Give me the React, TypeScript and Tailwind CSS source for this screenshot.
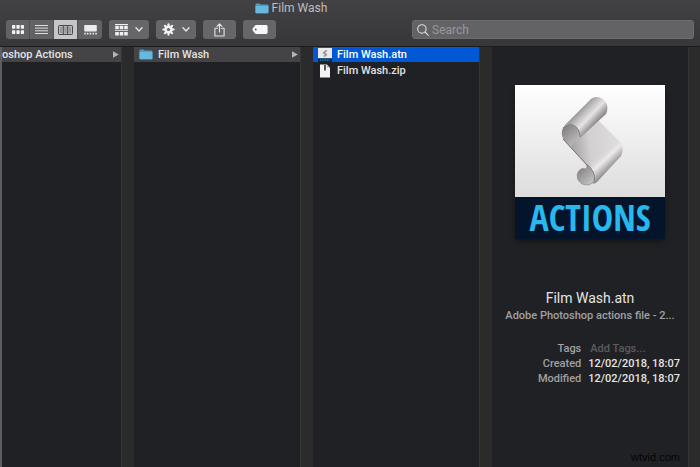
import { useState } from 'react';
import type { ReactNode } from 'react';
import clsx from 'clsx';

type Entry = { name: string; icon: 'folder' | 'atn' | 'zip' | null };

const files: Entry[] = [
  { name: 'Film Wash.atn', icon: 'atn' },
  { name: 'Film Wash.zip', icon: 'zip' },
];

const dates = [
  { label: 'Created', value: '12/02/2018, 18:07' },
  { label: 'Modified', value: '12/02/2018, 18:07' },
];

function FolderIcon() {
  return (
    <svg className="w-[14px] h-[11px] shrink-0" viewBox="0 0 14 11">
      <path d="M0.5 1.4Q0.5 0.6 1.3 0.6H4.6L5.8 1.6H12.6Q13.4 1.6 13.4 2.4V9.4Q13.4 10.2 12.6 10.2H1.3Q0.5 10.2 0.5 9.4Z" fill="#4a9ec4" />
      <path d="M0.5 2.9H13.4V9.4Q13.4 10.2 12.6 10.2H1.3Q0.5 10.2 0.5 9.4Z" fill="#67b8dc" />
    </svg>
  );
}

function AtnIcon() {
  return (
    <svg className="w-[14px] h-[14px] shrink-0" viewBox="0 0 14 14">
      <rect width="14" height="10.4" fill="#e9e9e9" />
      <rect y="10.4" width="14" height="3.6" fill="#0a2a4a" />
      <path d="M2 12.2H12" stroke="#2388a8" strokeWidth="1.2" strokeDasharray="1.2 0.5" />
      <path d="M8.2 2.8L5.6 4.8L8.4 6.6L6.4 8" fill="none" stroke="#929292" strokeWidth="1.7" strokeLinecap="round" strokeLinejoin="round" />
    </svg>
  );
}

function ZipIcon() {
  return (
    <svg className="w-[14px] h-[14px] shrink-0" viewBox="0 0 14 14">
      <path d="M2 0.5H8.8L12 3.8V13.5H2Z" fill="#f4f4f4" />
      <path d="M8.8 0.5V3.8H12Z" fill="#bdbdbd" />
      <path d="M7 1V6.6" stroke="#3c3c3c" strokeWidth="1.7" />
    </svg>
  );
}

function ChevronIcon() {
  return (
    <svg className="w-[8px] h-[5px]" viewBox="0 0 8 5" fill="none" stroke="#e6e6e7" strokeWidth="1.4" strokeLinecap="round" strokeLinejoin="round">
      <path d="M1 0.8L4 3.9L7 0.8" />
    </svg>
  );
}

function GridIcon() {
  return (
    <svg className="w-[12px] h-[9px]" viewBox="0 0 12 9" fill="#f2f2f2">
      {[0, 4.4, 8.8].map((x) => (
        <g key={x}>
          <rect x={x} y="0" width="3.3" height="3.7" rx="0.6" />
          <rect x={x} y="5.2" width="3.3" height="3.7" rx="0.6" />
        </g>
      ))}
    </svg>
  );
}

function ListIcon() {
  return (
    <svg className="w-[13px] h-[9px]" viewBox="0 0 13 9" stroke="#dededf" strokeWidth="1">
      <path d="M0 0.5H13M0 3.1H13M0 5.8H13M0 8.5H13" />
    </svg>
  );
}

function ColumnsIcon() {
  return (
    <svg className="w-[15px] h-[10px]" viewBox="0 0 15 10">
      <rect x="0.5" y="0.5" width="14" height="9" rx="0.8" fill="#b8b8bb" stroke="#48484b" strokeWidth="1" />
      <path d="M2 2H4.2V8H2ZM6.4 2H8.6V8H6.4ZM10.8 2H13V8H10.8Z" fill="#98989b" />
      <path d="M5.3 0.6V9.4M9.7 0.6V9.4" stroke="#48484b" strokeWidth="1" />
    </svg>
  );
}

function GalleryIcon() {
  return (
    <svg className="w-[13px] h-[10px]" viewBox="0 0 13 10" fill="#ececed">
      <rect x="0.2" y="0" width="12.6" height="6.6" rx="0.8" />
      <path d="M0.2 7.8H1.7V9.6H0.2ZM2.8 7.8H4.4V9.6H2.8ZM5.6 7.8H7.2V9.6H5.6ZM8.5 7.8H10.1V9.6H8.5ZM11.3 7.8H12.8V9.6H11.3Z" />
    </svg>
  );
}

function ArrangeIcon() {
  return (
    <svg className="w-[13px] h-[12px]" viewBox="0 0 13 12" fill="#f0f0f0">
      {[0.2, 4.7, 9.2].map((x) => (
        <g key={x}>
          <rect x={x} y="1.7" width="3.6" height="3.5" rx="0.5" />
          <rect x={x} y="8" width="3.6" height="3.5" rx="0.5" />
        </g>
      ))}
      <path d="M0 0H13V0.9H0ZM0 6.2H13V7.1H0Z" />
    </svg>
  );
}

function GearIcon() {
  return (
    <svg className="w-[13px] h-[13px]" viewBox="0 0 13 13">
      <g stroke="#f3f3f3" strokeWidth="2" strokeLinecap="round">
        {[0, 45, 90, 135].map((a) => (
          <path key={a} d="M6.5 1.3V11.7" transform={`rotate(${a} 6.5 6.5)`} />
        ))}
      </g>
      <circle cx="6.5" cy="6.5" r="4.2" fill="#f3f3f3" />
      <circle cx="6.5" cy="6.5" r="1.6" fill="#68686b" />
    </svg>
  );
}

function ShareIcon() {
  return (
    <svg className="w-[11px] h-[14px]" viewBox="0 0 11 14" fill="none" stroke="#e4e4e5" strokeWidth="1.1" strokeLinecap="round" strokeLinejoin="round">
      <path d="M3.6 5.2H0.9V13H10.1V5.2H7.4M5.5 9V1M3 3.4L5.5 0.9L8 3.4" />
    </svg>
  );
}

function TagIcon() {
  return (
    <svg className="w-[16px] h-[9px]" viewBox="0 0 16 9">
      <path d="M4.2 0.1H14.2Q15.6 0.1 15.6 1.5V7.5Q15.6 8.9 14.2 8.9H4.2Q3.4 8.9 2.8 8.2L0.6 5.3Q0.1 4.5 0.6 3.7L2.8 0.8Q3.4 0.1 4.2 0.1Z" fill="#f7f7f7" />
      <circle cx="3.7" cy="4.5" r="1" fill="#626265" />
    </svg>
  );
}

function ScrollArt() {
  return (
    <svg className="w-[64px] h-[90px]" viewBox="0 0 64 90">
      <defs>
        <linearGradient id="sheet" gradientUnits="userSpaceOnUse" x1="14" y1="56" x2="62" y2="50">
          <stop offset="0" stopColor="#a9a6a7" />
          <stop offset="0.35" stopColor="#d3d0d1" />
          <stop offset="1" stopColor="#dfdddE" />
        </linearGradient>
        <linearGradient id="topRoll" gradientUnits="userSpaceOnUse" x1="17" y1="12" x2="34" y2="28">
          <stop offset="0" stopColor="#858384" />
          <stop offset="0.3" stopColor="#b9b7b8" />
          <stop offset="0.62" stopColor="#e6e4e5" />
          <stop offset="1" stopColor="#8d8b8c" />
        </linearGradient>
        <linearGradient id="bottomRoll" gradientUnits="userSpaceOnUse" x1="40" y1="57" x2="53" y2="71">
          <stop offset="0" stopColor="#d9d6d7" stopOpacity="0" />
          <stop offset="0.4" stopColor="#eceaeb" />
          <stop offset="1" stopColor="#858384" />
        </linearGradient>
        <linearGradient id="inside" x1="0" y1="0" x2="0.8" y2="1">
          <stop offset="0" stopColor="#777576" />
          <stop offset="1" stopColor="#c6c4c5" />
        </linearGradient>
      </defs>
      <path d="M3 42L20 34L39 24L58 43Q64 48 62 55L36 82L26 67Z" fill="url(#sheet)" />
      <path d="M58 43Q65 50 61 59L37 85Q34 88 32 86Q36 75 26 67L46 44Z" fill="url(#bottomRoll)" />
      <path d="M4 29L31 2Q36 -2 43 2Q50 8 46 17L20 41Q21 31 13 28Q7 26 4 29Z" fill="url(#topRoll)" />
      <path d="M3 31Q7 26 13 28Q20 31 20 40L17 43Q13 45 11 50L4 43Q0 37 3 31Z" fill="url(#inside)" />
      <path d="M3 31Q7 26 13 28Q20 31 20 40" stroke="#6f6d6e" strokeWidth="0.7" fill="none" />
      <path d="M3 42L26 67Q36 74 34 84" stroke="#716f70" strokeWidth="1" fill="none" />
      <path d="M26 67Q36 74 34 84Q30 90 22 87Q15 82 18 75Q21 70 26 72Q28 70 26 67Z" fill="url(#inside)" stroke="#858384" strokeWidth="0.6" />
    </svg>
  );
}

function FileIcon({ icon }: { icon: Entry['icon'] }) {
  if (icon === 'folder') return <FolderIcon />;
  if (icon === 'atn') return <AtnIcon />;
  if (icon === 'zip') return <ZipIcon />;
  return null;
}

function ToolButton({ label, className, children }: { label: string; className: string; children: ReactNode }) {
  return (
    <button
      type="button"
      aria-label={label}
      className={clsx('h-[19px] shrink-0 flex items-center justify-center rounded-[3px] bg-[#666669]', className)}
    >
      {children}
    </button>
  );
}

function FolderRow({ name, icon }: Entry) {
  return (
    <button type="button" className="w-full h-[15px] flex items-center bg-[#444446] pr-[2px] text-[#e2e2e3]">
      {icon && (
        <span className="pl-[5px] pr-[5px]">
          <FileIcon icon={icon} />
        </span>
      )}
      <span className="whitespace-nowrap">{name}</span>
      <svg className="ml-auto w-[6px] h-[7px]" viewBox="0 0 6 7">
        <path d="M0 0.2L5.8 3.5L0 6.8Z" fill="#b4b4b5" />
      </svg>
    </button>
  );
}

function Divider() {
  return <div className="bg-[#2b2b2c] border-l border-[#353536]" />;
}

export default function App() {
  const [view, setView] = useState('columns');
  const [selected, setSelected] = useState('Film Wash.atn');
  const [query, setQuery] = useState('');

  const views = [
    { id: 'icons', label: 'Icon view', icon: <GridIcon /> },
    { id: 'list', label: 'List view', icon: <ListIcon /> },
    { id: 'columns', label: 'Column view', icon: <ColumnsIcon /> },
    { id: 'gallery', label: 'Gallery view', icon: <GalleryIcon /> },
  ];

  return (
    <main className="relative min-h-screen flex flex-col bg-[#202124] font-['Roboto','Liberation_Sans',sans-serif] text-[11px] leading-[15px] font-medium">
      <header className="flex flex-col bg-linear-to-b from-[#424246] to-[#373739] border-b border-[#1b1b1c] pb-[7px]">
        <div className="h-5 flex items-center justify-center gap-[3px] pr-[118px] pb-1 text-xs font-normal text-[#bdbdbf]">
          <FolderIcon />
          <h1>Film Wash</h1>
        </div>

        <div className="flex items-center gap-[7px] px-[6px]">
          <div className="flex shrink-0 rounded-[3px] overflow-hidden bg-[#626265]">
            {views.map((v) => (
              <button
                key={v.id}
                type="button"
                aria-label={v.label}
                aria-pressed={view === v.id}
                onClick={() => setView(v.id)}
                className={clsx(
                  'w-6 h-[19px] flex items-center justify-center border-r border-[#515154] last:border-r-0',
                  view === v.id && 'bg-[#c6c6ca]'
                )}
              >
                {v.icon}
              </button>
            ))}
          </div>
          <ToolButton label="Group items" className="w-10 gap-[7px]">
            <ArrangeIcon />
            <ChevronIcon />
          </ToolButton>
          <ToolButton label="Actions" className="w-10 gap-[7px]">
            <GearIcon />
            <ChevronIcon />
          </ToolButton>
          <ToolButton label="Share" className="w-[33px]">
            <ShareIcon />
          </ToolButton>
          <ToolButton label="Edit tags" className="w-[33px]">
            <TagIcon />
          </ToolButton>

          <label className="ml-[129px] flex-1 min-w-0 h-[19px] flex items-center gap-[3px] rounded-[3px] bg-[#636366] border border-[#6c6c6f] pl-1">
            <svg className="w-3 h-3 shrink-0" viewBox="0 0 12 12" fill="none" stroke="#dededf" strokeWidth="1.1" strokeLinecap="round">
              <circle cx="4.9" cy="4.9" r="4.2" />
              <path d="M8 8L11.3 11.3" />
            </svg>
            <input
              type="text"
              aria-label="Search"
              placeholder="Search"
              value={query}
              onChange={(e) => setQuery(e.target.value)}
              className="w-full min-w-0 bg-transparent text-xs font-normal text-[#e2e2e3] placeholder:text-[#97979a] focus:outline-0"
            />
          </label>
        </div>
      </header>

      <div className="flex-1 grid grid-cols-[119fr_13px_166fr_13px_166fr_13px_196fr_12px] border-l-2 border-[#5d5d5f]">
        <div className="min-w-0 overflow-hidden">
          <FolderRow name="oshop Actions" icon={null} />
        </div>
        <Divider />
        <div className="min-w-0">
          <FolderRow name="Film Wash" icon="folder" />
        </div>
        <Divider />
        <div className="min-w-0 flex flex-col gap-px">
          {files.map((f) => (
            <button
              key={f.name}
              type="button"
              onClick={() => setSelected(f.name)}
              className={clsx(
                'h-[15px] flex items-center gap-[5px] pl-[5px]',
                selected === f.name ? 'bg-[#0058d4] text-white' : 'text-[#e2e2e3]'
              )}
            >
              <FileIcon icon={f.icon} />
              <span>{f.name}</span>
            </button>
          ))}
        </div>
        <Divider />

        <section className="min-w-0 flex flex-col items-center pt-[38px]">
          <div className="w-[150px] shadow-md shadow-black/30">
            <div className="h-28 flex justify-center pt-3 pl-1 bg-linear-to-b from-white to-[#dddddd]">
              <ScrollArt />
            </div>
            <div className="h-[42px] flex items-center justify-center bg-[#03142b] text-[#28b8ee] text-[36px] leading-[42px] font-bold font-['Open_Sans_Condensed','Liberation_Sans_Narrow','Roboto_Condensed',sans-serif]">
              ACTIONS
            </div>
          </div>
          <h2 className="mt-[49px] text-sm leading-5 font-normal text-[#e4e4e5]">Film Wash.atn</h2>
          <p className="whitespace-nowrap text-[#a0a0a2]">Adobe Photoshop actions file - 2...</p>

          <table className="mt-[18px] w-[180px]">
            <tbody>
              <tr>
                <th className="p-0 pr-[7px] text-right font-medium text-[#a0a0a2]">Tags</th>
                <td className="p-0 pl-[2px] text-[#5b5b5e]">Add Tags...</td>
              </tr>
              {dates.map((d) => (
                <tr key={d.label}>
                  <th className="p-0 pr-[7px] text-right font-medium text-[#a0a0a2]">{d.label}</th>
                  <td className="w-[88px] p-0 whitespace-nowrap text-[#e4e4e5]">{d.value}</td>
                </tr>
              ))}
            </tbody>
          </table>
        </section>
        <Divider />
      </div>

      <span className="absolute right-5 bottom-[2px] font-['Liberation_Sans',sans-serif] font-normal text-[#050505]">wtvid.com</span>
    </main>
  );
}
